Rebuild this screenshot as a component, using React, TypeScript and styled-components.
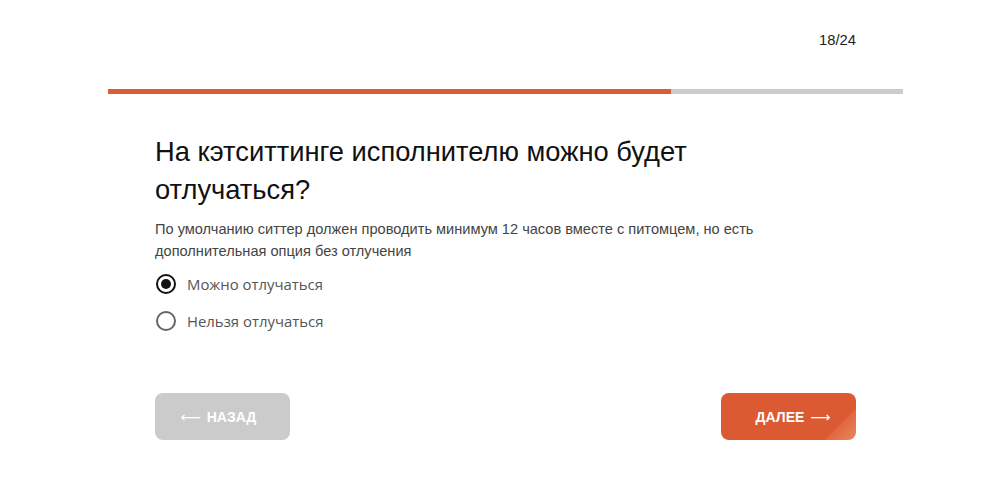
import React, { useState } from "react";
import styled, { createGlobalStyle } from "styled-components";

const Global = createGlobalStyle`
  html, body { margin: 0; padding: 0; background: #fff; }
  body { font-family: "Liberation Sans", Arial, sans-serif; }
`;

const Page = styled.div`
  width: 795px;
  margin-left: 108px;
  padding-top: 32px;
`;

const Counter = styled.div`
  display: flex;
  justify-content: flex-end;
  padding-right: 47px;
  font-size: 14.8px;
  line-height: 16px;
  color: #222;
  height: 16px;
`;

const Track = styled.div`
  margin-top: 41px;
  height: 5px;
  background: #cbcbcb;
`;

const Fill = styled.div`
  height: 100%;
  background: #de5b33;
`;

const Content = styled.div`
  padding: 39px 47px 0;
`;

const Title = styled.h1`
  margin: 0;
  font-size: 27.3px;
  font-weight: 400;
  line-height: 38px;
  color: #111;
  max-width: 600px;
`;

const Hint = styled.p`
  margin: 9px 0 0;
  font-size: 14.6px;
  line-height: 22px;
  color: #444;
`;

const Options = styled.div`
  display: flex;
  flex-direction: column;
  gap: 15px;
  margin-top: 11px;
`;

const Option = styled.label`
  display: flex;
  align-items: center;
  gap: 11px;
  cursor: pointer;
  font-family: "Open Sans", "Noto Sans", sans-serif;
  font-size: 14.9px;
  color: #555;
  height: 22px;
`;

const Circle = styled.span<{ $on: boolean }>`
  box-sizing: border-box;
  width: 20px;
  height: 20px;
  border-radius: 50%;
  border: 2px solid ${(p) => (p.$on ? "#111" : "#666")};
  display: flex;
  align-items: center;
  justify-content: center;
  margin-left: 1px;
  &::after {
    content: "";
    width: 10px;
    height: 10px;
    border-radius: 50%;
    background: #111;
    display: ${(p) => (p.$on ? "block" : "none")};
  }
`;

const Actions = styled.div`
  display: flex;
  justify-content: space-between;
  margin-top: 61px;
`;

const Button = styled.button<{ $primary?: boolean }>`
  width: 135px;
  height: 47px;
  border: none;
  border-radius: 8px;
  color: #fff;
  font-family: "Liberation Sans", Arial, sans-serif;
  font-weight: 700;
  font-size: 14px;
  display: flex;
  align-items: center;
  justify-content: center;
  gap: 6px;
  cursor: pointer;
  padding: ${(p) => (p.$primary ? "0 0 0 9px" : "0 8px 0 0")};
  background: ${(p) =>
    p.$primary
      ? "linear-gradient(135deg, #dc5a32 0%, #dc5a32 82%, #e06a41 84%, #e8875f 100%)"
      : "#cbcbcb"};
`;

const Arrow = styled.span`
  font-family: "DejaVu Sans", sans-serif;
  font-weight: 400;
  font-size: 14px;
  line-height: 1;
`;

export default function App() {
  const [value, setValue] = useState(0);
  const options = ["Можно отлучаться", "Нельзя отлучаться"];
  return (
    <>
      <Global />
      <Page>
        <Counter>18/24</Counter>
        <Track>
          <Fill style={{ width: `${(563 / 795) * 100}%` }} />
        </Track>
        <Content>
          <Title>На кэтситтинге исполнителю можно будет отлучаться?</Title>
          <Hint>
            По умолчанию ситтер должен проводить минимум 12 часов вместе с питомцем, но есть
            <br />
            дополнительная опция без отлучения
          </Hint>
          <Options>
            {options.map((o, i) => (
              <Option key={o} onClick={() => setValue(i)}>
                <Circle $on={value === i} />
                {o}
              </Option>
            ))}
          </Options>
          <Actions>
            <Button>
              <Arrow>⟵</Arrow>НАЗАД
            </Button>
            <Button $primary>
              ДАЛЕЕ<Arrow>⟶</Arrow>
            </Button>
          </Actions>
        </Content>
      </Page>
    </>
  );
}
